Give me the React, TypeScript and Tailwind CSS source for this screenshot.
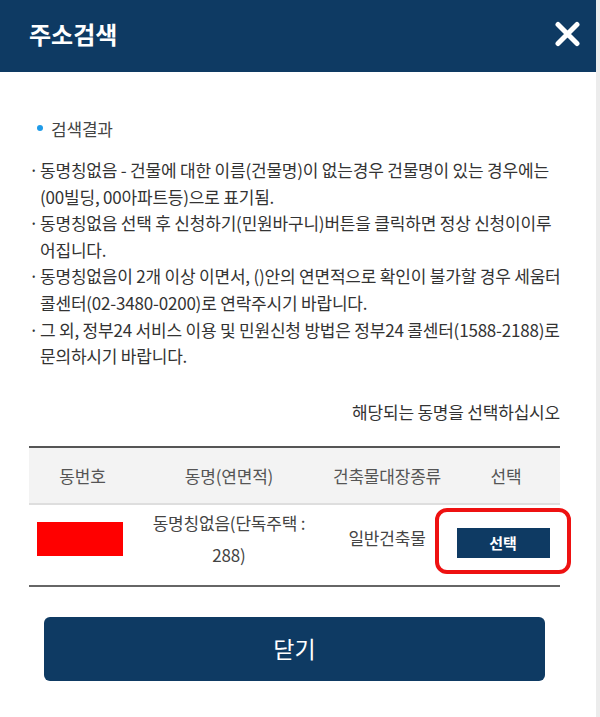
import React from 'react';

const notes: string[][] = [
    ['동명칭없음 - 건물에 대한 이름(건물명)이 없는경우 건물명이 있는 경우에는', '(00빌딩, 00아파트등)으로 표기됨.'],
    ['동명칭없음 선택 후 신청하기(민원바구니)버튼을 클릭하면 정상 신청이이루', '어집니다.'],
    ['동명칭없음이 2개 이상 이면서, ()안의 연면적으로 확인이 불가할 경우 세움터', '콜센터(02-3480-0200)로 연락주시기 바랍니다.'],
    ['그 외, 정부24 서비스 이용 및 민원신청 방법은 정부24 콜센터(1588-2188)로', '문의하시기 바랍니다.'],
];

export default function App() {
    return (
        <div className="flex w-[600px] h-[717px] bg-white font-['Noto_Sans_CJK_KR','Noto_Sans',sans-serif] tracking-[-0.2px]">
            <div className="flex flex-col w-[596px]">
                {/* header */}
                <div className="flex items-center justify-between h-[72px] bg-[#0e3a63] pl-[29px] pr-[15px] pb-[4px]">
                    <h1 className="text-[24px] leading-none font-bold text-white tracking-normal">주소검색</h1>
                    <button className="w-[28px] h-[28px] flex items-center justify-center" aria-label="닫기">
                        <svg width="27" height="26" viewBox="0 0 27 26">
                            <path d="M4 3.5L23 22.5M23 3.5L4 22.5" stroke="#fff" strokeWidth="5" strokeLinecap="round" />
                        </svg>
                    </button>
                </div>

                <div className="flex flex-col pl-[29px] pr-[36px]">
                    {/* result title */}
                    <div className="flex items-center gap-[8px] pl-[8px] mt-[45px] h-[24px]">
                        <span className="w-[6px] h-[6px] rounded-full bg-[#1f9be8] -mt-[3px]" />
                        <span className="text-[17px] leading-[24px] text-[#444]">검색결과</span>
                    </div>

                    {/* notes */}
                    <ul className="mt-[16px] text-[17px] leading-[26.6px] text-[#333]">
                        {notes.map((lines, i) => (
                            <li key={i} className="flex">
                                <span className="w-[11px] shrink-0">·</span>
                                <span className="whitespace-nowrap">
                                    {lines[0]}
                                    <br />
                                    {lines[1]}
                                </span>
                            </li>
                        ))}
                    </ul>

                    <p className="mt-[30px] text-right text-[17px] leading-[24px] text-[#333]">해당되는 동명을 선택하십시오</p>

                    {/* table */}
                    <div className="mt-[22px] border-t-2 border-b-2 border-t-[#555] border-b-[#666] text-[17px] text-[#444]">
                        <div className="grid grid-cols-[107px_186px_130px_108px] h-[57px] items-center bg-[#f3f3f3] border-b-2 border-[#dedede] text-center text-[#555]">
                            <div>동번호</div>
                            <div>동명(연면적)</div>
                            <div>건축물대장종류</div>
                            <div>선택</div>
                        </div>
                        <div className="grid grid-cols-[107px_186px_130px_108px] h-[80px] items-center text-center">
                            <div className="flex justify-center -mt-[12px]">
                                <div className="w-[86px] h-[34px] bg-[#ff0000] -ml-[5px]" />
                            </div>
                            <div className="leading-[32px] -mt-[12px]">
                                동명칭없음(단독주택 :
                                <br />
                                288)
                            </div>
                            <div className="-mt-[14px]">일반건축물</div>
                            <div className="flex justify-center -mt-[4px]">
                                <div className="relative -ml-[6px]">
                                    <button className="w-[93px] h-[30px] bg-[#0e3a63] text-white text-[15px] font-bold leading-[30px] tracking-normal">
                                        선택
                                    </button>
                                    <span className="absolute -left-[22px] -right-[21px] -top-[20px] -bottom-[16px] border-[4px] border-[#ee1111] rounded-[12px] pointer-events-none" />
                                </div>
                            </div>
                        </div>
                    </div>

                    <div className="px-[15px] mt-[30px]">
                        <button className="w-full h-[64px] rounded-[6px] bg-[#0e3a63] text-white text-[23px] leading-none tracking-normal">
                            닫기
                        </button>
                    </div>
                </div>
            </div>
            <div className="w-[4px] bg-[#ececec]" />
        </div>
    );
}
